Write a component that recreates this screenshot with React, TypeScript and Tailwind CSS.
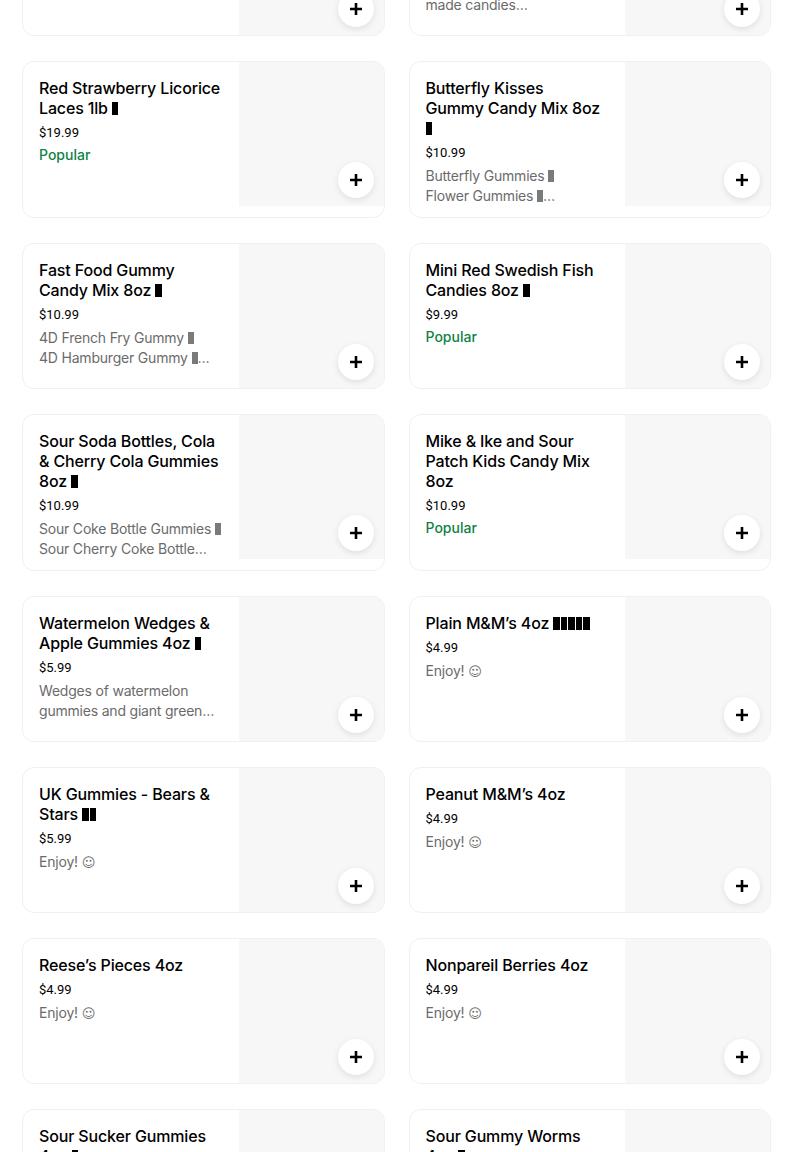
import React from "react";

type Item = {
  title: string;
  price: string;
  desc?: string;
  popular?: boolean;
};

const B = "▮";

const rows: [Item, Item][] = [
  [
    { title: "Red Strawberry Licorice Laces 1lb " + B, price: "$19.99", popular: true },
    {
      title: "Butterfly Kisses\nGummy Candy Mix 8oz\n" + B,
      price: "$10.99",
      desc: "Butterfly Gummies " + B + "\nFlower Gummies " + B + "\nBee Gummies " + B,
    },
  ],
  [
    {
      title: "Fast Food Gummy Candy Mix 8oz " + B,
      price: "$10.99",
      desc: "4D French Fry Gummy " + B + "\n4D Hamburger Gummy " + B + "\n4D Hot Dog Gummy " + B,
    },
    { title: "Mini Red Swedish Fish Candies 8oz " + B, price: "$9.99", popular: true },
  ],
  [
    {
      title: "Sour Soda Bottles, Cola & Cherry Cola Gummies 8oz " + B,
      price: "$10.99",
      desc: "Sour Coke Bottle Gummies " + B + "\nSour Cherry Coke Bottle Gummies " + B,
    },
    { title: "Mike & Ike and Sour Patch Kids Candy Mix 8oz", price: "$10.99", popular: true },
  ],
  [
    {
      title: "Watermelon Wedges & Apple Gummies 4oz " + B,
      price: "$5.99",
      desc: "Wedges of watermelon gummies and giant green apple rings",
    },
    { title: "Plain M&M’s 4oz " + B + B + B + B + B, price: "$4.99", desc: "Enjoy! ☺" },
  ],
  [
    { title: "UK Gummies - Bears & Stars " + B + B, price: "$5.99", desc: "Enjoy! ☺" },
    { title: "Peanut M&M’s 4oz", price: "$4.99", desc: "Enjoy! ☺" },
  ],
  [
    { title: "Reese’s Pieces 4oz", price: "$4.99", desc: "Enjoy! ☺" },
    { title: "Nonpareil Berries 4oz", price: "$4.99", desc: "Enjoy! ☺" },
  ],
  [
    { title: "Sour Sucker Gummies\n4oz " + B, price: "$5.99", desc: "Enjoy! ☺" },
    { title: "Sour Gummy Worms\n4oz " + B, price: "$5.99", desc: "Enjoy! ☺" },
  ],
];

const topRow: [Item, Item] = [
  { title: "Gummy Sharks Candy Mix 8oz " + B, price: "$10.99", popular: true },
  {
    title: "Chocolate Candy Mix Box 8oz " + B,
    price: "$12.99",
    desc: "Assorted chocolate house\nmade candies\nand more",
  },
];

function PlusButton() {
  return (
    <div className="absolute right-[10px] bottom-[8px] w-9 h-9 rounded-full bg-white shadow-[0_2px_6px_rgba(0,0,0,0.10)] flex items-center justify-center">
      <svg width="14" height="14" viewBox="0 0 14 14">
        <path d="M7 1v12M1 7h12" stroke="#000" strokeWidth="2.6" />
      </svg>
    </div>
  );
}

function Blocks({ count, gray }: { count: number; gray?: boolean }) {
  const items = Array.from({ length: count });
  return (
    <span className="inline-flex gap-[1px] align-[-1px]" aria-label={B.repeat(count)}>
      {items.map((_, i) =>
        gray ? (
          <span key={i} className="inline-block w-[6px] h-[12px] bg-[#7a7a7a]" />
        ) : (
          <span key={i} className="inline-block w-[6.5px] h-[13px] bg-black" />
        )
      )}
    </span>
  );
}

function Rich({ text, gray }: { text: string; gray?: boolean }) {
  const parts = text.split(/(▮+|☺)/);
  return (
    <>
      {parts.map((p, i) => {
        if (p.startsWith(B)) return <Blocks key={i} count={p.length} gray={gray} />;
        if (p === "☺")
          return (
            <span key={i} className="font-['DejaVu_Sans'] text-[13px]">
              {p}
            </span>
          );
        return <span key={i}>{p}</span>;
      })}
    </>
  );
}

function Card({ item }: { item: Item }) {
  return (
    <div className="flex rounded-xl border border-[#f0f0f0] bg-white overflow-hidden">
      <div className="flex-1 min-w-0 pl-4 pr-[14px] pt-4 pb-[11px]">
        <div className="text-[16px] leading-5 font-medium text-black tracking-[-0.15px] whitespace-pre-line">
          <Rich text={item.title} />
        </div>
        <div className="mt-[5px] text-[13px] leading-5 text-black font-['Roboto',sans-serif]">{item.price}</div>
        {item.popular && (
          <div className="mt-[2px] text-[14px] leading-5 font-medium text-[#0e8345]">Popular</div>
        )}
        {item.desc && (
          <div className="mt-[3px] text-[14px] leading-5 text-[#6b6b6b] tracking-[-0.2px] line-clamp-2 whitespace-pre-line">
            <Rich text={item.desc} gray />
          </div>
        )}
      </div>
      <div className="relative w-[145px] h-[144px] shrink-0 bg-[#f7f7f7]">
        <PlusButton />
      </div>
    </div>
  );
}

export default function App() {
  return (
    <div className="w-[804px] h-[1152px] overflow-hidden bg-white font-['Inter',sans-serif]">
      <div className="ml-[22px] w-[749px] -mt-[110px] grid grid-cols-2 gap-x-6 gap-y-[25px]">
        <Card item={topRow[0]} />
        <Card item={topRow[1]} />
        {rows.map(([a, b], i) => (
          <React.Fragment key={i}>
            <Card item={a} />
            <Card item={b} />
          </React.Fragment>
        ))}
      </div>
    </div>
  );
}
